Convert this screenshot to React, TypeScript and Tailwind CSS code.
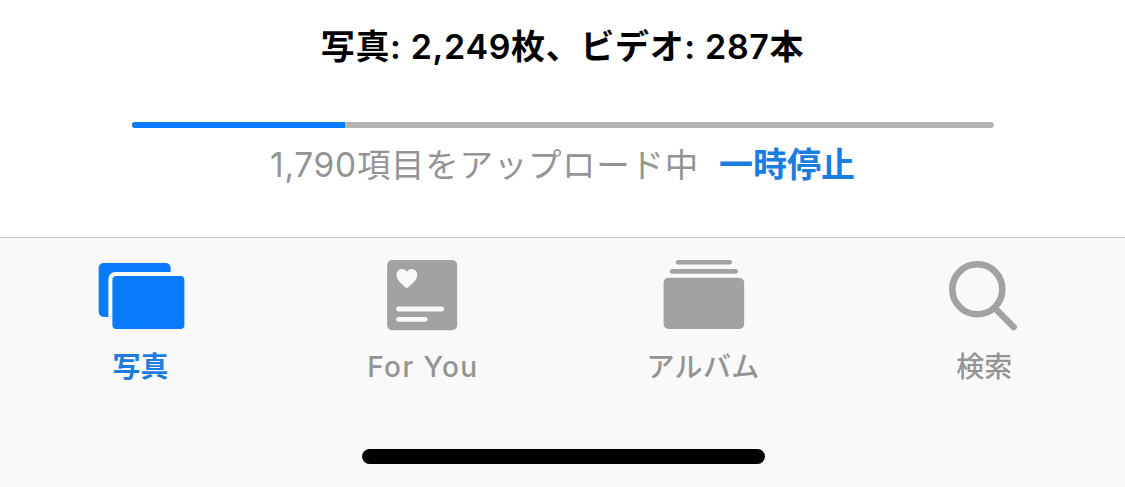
import React from 'react';

const FONT = "font-['Inter','Noto_Sans_CJK_JP',sans-serif]";

const PhotosIcon = () => (
  <svg viewBox="90.625 260 100 72" className="h-[72px] w-[100px]">
    <rect x="98.3" y="263" width="72" height="54" rx="5" fill="#0a7aff" />
    <rect x="108" y="272" width="80" height="61" rx="7" fill="#f9f9f9" />
    <rect x="112" y="276" width="72" height="53" rx="4" fill="#0a7aff" />
  </svg>
);

const ForYouIcon = () => (
  <svg viewBox="371.875 260 100 72" className="h-[72px] w-[100px]">
    <rect x="387" y="260" width="70" height="70.3" rx="5" fill="#a2a2a2" />
    <path
      d="M406.7 288.2c-1-.9-10.4-7.2-10.4-13.3 0-3.4 2.5-5.9 5.6-5.9 2.1 0 3.8 1.1 4.8 2.8 1-1.7 2.7-2.8 4.8-2.8 3.1 0 5.6 2.5 5.6 5.9 0 6.1-9.4 12.4-10.4 13.3z"
      fill="#f9f9f9"
    />
    <rect x="396" y="306.6" width="48" height="4.8" rx="2.4" fill="#f9f9f9" />
    <rect x="396" y="317" width="31.5" height="4.8" rx="2.4" fill="#f9f9f9" />
  </svg>
);

const AlbumsIcon = () => (
  <svg viewBox="653.125 260 100 72" className="h-[72px] w-[100px]">
    <rect x="676" y="260" width="56" height="4.6" rx="2.3" fill="#a2a2a2" />
    <rect x="670" y="269" width="68" height="4.8" rx="2.4" fill="#a2a2a2" />
    <rect x="663.7" y="277.7" width="80.6" height="51.3" rx="5" fill="#a2a2a2" />
  </svg>
);

const SearchIcon = () => (
  <svg viewBox="934.375 260 100 72" className="h-[72px] w-[100px]">
    <circle cx="977.7" cy="289.3" r="25" fill="none" stroke="#a2a2a2" strokeWidth="6.6" />
    <path d="M995.5 308.5 1014 327" fill="none" stroke="#a2a2a2" strokeWidth="6.6" strokeLinecap="round" />
  </svg>
);

const tabs = [
  { label: '写真', icon: <PhotosIcon />, active: true, tracking: 'tracking-[0px]' },
  { label: 'For You', icon: <ForYouIcon />, active: false, tracking: 'pl-[2px] tracking-[1.4px]' },
  { label: 'アルバム', icon: <AlbumsIcon />, active: false, tracking: 'tracking-[0.4px]' },
  { label: '検索', icon: <SearchIcon />, active: false, tracking: 'tracking-[0px]' },
];

export default function App() {
  return (
    <div className={`flex h-[487px] w-[1125px] flex-col overflow-hidden bg-white ${FONT}`}>
      <div className="h-[238px] border-b border-[#c4c4c4] px-[132px] pt-[24px]">
        <p className="whitespace-nowrap text-center text-[34px] leading-[46px] font-semibold tracking-[0.65px] text-black">
          写真: 2,249枚、ビデオ: 287本
        </p>
        <div className="mt-[52px] flex h-[6px] w-[862px] overflow-hidden rounded-full bg-[#b4b4b4]">
          <div className="h-full w-[213px] bg-[#0a7aff]" />
        </div>
        <p className="mt-[14px] flex justify-center gap-[20px] whitespace-nowrap text-[33.5px] leading-[46px] text-[#949494]">
          <span className="tracking-[0.7px]">1,790項目をアップロード中</span>
          <span className="text-[34px] font-semibold text-[#1c7de0]">一時停止</span>
        </p>
      </div>
      <div className="flex flex-1 flex-col bg-[#f9f9f9]">
        <div className="grid grid-cols-4 pt-[22px]">
          {tabs.map((tab) => (
            <div key={tab.label} className="flex flex-col items-center">
              {tab.icon}
              <span
                className={`mt-[16px] text-[28px] leading-[38px] font-medium ${tab.tracking} ${tab.active ? 'font-semibold text-[#1c7de0]' : 'text-[#949494]'}`}
              >
                {tab.label}
              </span>
            </div>
          ))}
        </div>
        <div className="mt-[63px] flex justify-center">
          <div className="ml-[2px] h-[15px] w-[403px] rounded-full bg-black" />
        </div>
      </div>
    </div>
  );
}
